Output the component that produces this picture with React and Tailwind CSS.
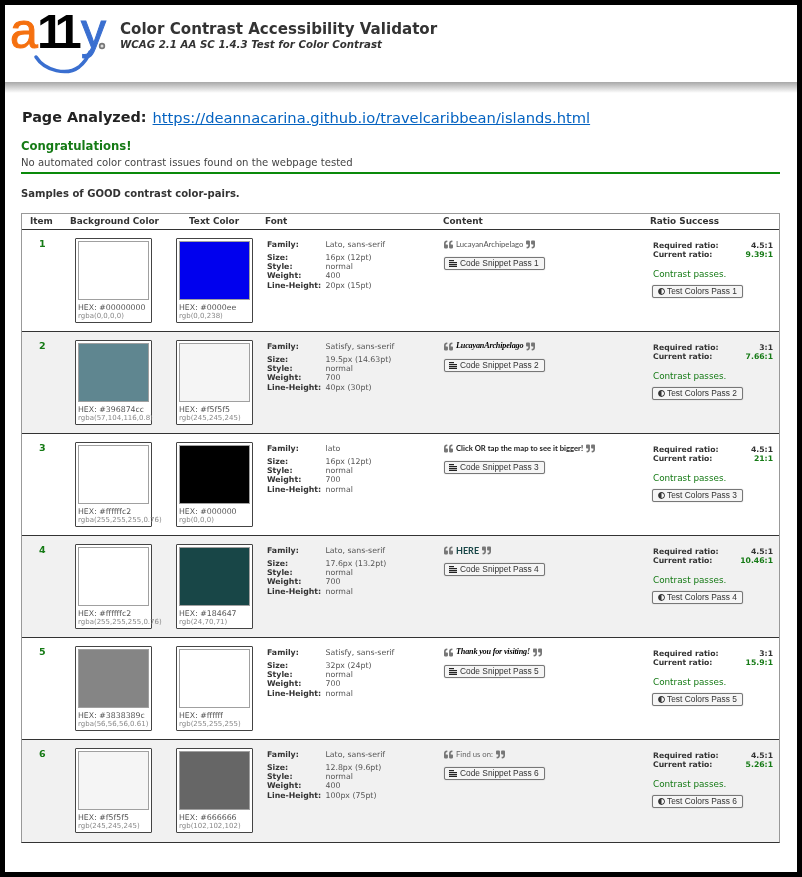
import React from 'react';
import { FaQuoteLeft, FaQuoteRight, FaAdjust } from 'react-icons/fa';

const rows = [
  {
    bgSwatch: '#ffffff', bgHex: '#00000000', bgRgb: 'rgba(0,0,0,0)',
    fgSwatch: '#0000ee', fgHex: '#0000ee', fgRgb: 'rgb(0,0,238)',
    family: 'Lato, sans-serif', size: '16px (12pt)', style: 'normal', weight: '400', lineHeight: '20px (15pt)',
    content: 'LucayanArchipelago', contentClass: 'text-[#555] font-normal',
    required: '4.5:1', current: '9.39:1',
  },
  {
    bgSwatch: '#5f8690', bgHex: '#396874cc', bgRgb: 'rgba(57,104,116,0.8)',
    fgSwatch: '#f5f5f5', fgHex: '#f5f5f5', fgRgb: 'rgb(245,245,245)',
    family: 'Satisfy, sans-serif', size: '19.5px (14.63pt)', style: 'normal', weight: '700', lineHeight: '40px (30pt)',
    content: 'LucayanArchipelago', contentClass: 'script text-black',
    required: '3:1', current: '7.66:1',
  },
  {
    bgSwatch: '#ffffff', bgHex: '#ffffffc2', bgRgb: 'rgba(255,255,255,0.76)',
    fgSwatch: '#000000', fgHex: '#000000', fgRgb: 'rgb(0,0,0)',
    family: 'lato', size: '16px (12pt)', style: 'normal', weight: '700', lineHeight: 'normal',
    content: 'Click OR tap the map to see it bigger!', contentClass: 'text-[#222] font-bold',
    required: '4.5:1', current: '21:1',
  },
  {
    bgSwatch: '#ffffff', bgHex: '#ffffffc2', bgRgb: 'rgba(255,255,255,0.76)',
    fgSwatch: '#184647', fgHex: '#184647', fgRgb: 'rgb(24,70,71)',
    family: 'Lato, sans-serif', size: '17.6px (13.2pt)', style: 'normal', weight: '700', lineHeight: 'normal',
    content: 'HERE', contentClass: 'text-[#184647] font-bold text-[9px]',
    required: '4.5:1', current: '10.46:1',
  },
  {
    bgSwatch: '#858585', bgHex: '#3838389c', bgRgb: 'rgba(56,56,56,0.61)',
    fgSwatch: '#ffffff', fgHex: '#ffffff', fgRgb: 'rgb(255,255,255)',
    family: 'Satisfy, sans-serif', size: '32px (24pt)', style: 'normal', weight: '700', lineHeight: 'normal',
    content: 'Thank you for visiting!', contentClass: 'script text-black',
    required: '3:1', current: '15.9:1',
  },
  {
    bgSwatch: '#f5f5f5', bgHex: '#f5f5f5', bgRgb: 'rgb(245,245,245)',
    fgSwatch: '#666666', fgHex: '#666666', fgRgb: 'rgb(102,102,102)',
    family: 'Lato, sans-serif', size: '12.8px (9.6pt)', style: 'normal', weight: '400', lineHeight: '100px (75pt)',
    content: 'Find us on:', contentClass: 'text-[#666] font-normal',
    required: '4.5:1', current: '5.26:1',
  },
];

function Logo() {
  return (
    <svg width="108" height="76" viewBox="0 0 108 76" className="shrink-0 overflow-visible">
      <text x="5" y="43" fontFamily="Liberation Sans" fontSize="50" fill="#f5700f" stroke="#f5700f" strokeWidth="1">a</text>
      <text x="32" y="43" fontFamily="Liberation Sans" fontSize="49" fontWeight="700" fill="#000" letterSpacing="-7">11</text>
      <text x="76" y="43" fontFamily="Liberation Sans" fontSize="50" fill="#3a6fd0" stroke="#3a6fd0" strokeWidth="1">y</text>
      <path d="M31 52 C40 66 62 71 74 62 C80 57 83 52 85 47" fill="none" stroke="#3a6fd0" strokeWidth="3.5" strokeLinecap="round" />
      <circle cx="97" cy="41" r="3.2" fill="#777" />
      <circle cx="97" cy="41" r="1.5" fill="#ddd" />
    </svg>
  );
}

function SnippetIcon() {
  return (
    <svg width="8" height="7" viewBox="0 0 8 7" className="shrink-0" fill="#222">
      <rect x="0" y="0" width="5" height="1.2" />
      <rect x="0" y="2" width="8" height="1.2" />
      <rect x="0" y="4" width="8" height="1.2" />
      <rect x="0" y="5.8" width="8" height="1.2" />
    </svg>
  );
}

function Swatch({ color, hex, rgb }) {
  return (
    <div className="w-[77px] h-[85px] border border-[#444] bg-white rounded-[1px] px-[2px] pt-[2px]">
      <div className="h-[59px] border-[1.5px] border-[#a0a0a0]" style={{ backgroundColor: color }} />
      <div className="text-[7.8px] leading-[9px] text-[#555] mt-[3px] whitespace-nowrap">HEX: {hex}</div>
      <div className="text-[7px] leading-[9px] text-[#888] whitespace-nowrap">{rgb}</div>
    </div>
  );
}

function PassButton({ icon, children, className }) {
  return (
    <button className={`flex items-center h-[13px] border border-[#777] rounded-[2px] bg-[#f5f5f5] shadow-[0_0_1px_#999] font-['Liberation_Sans'] text-[8.4px] text-[#333] whitespace-nowrap pr-[5px] ${className}`}>
      {icon}
      {children}
    </button>
  );
}

function Row({ row, index, last }) {
  const details = [
    ['Size:', row.size],
    ['Style:', row.style],
    ['Weight:', row.weight],
    ['Line-Height:', row.lineHeight],
  ];
  const isScript = row.contentClass.includes('script');
  return (
    <div className={`grid grid-cols-[53px_101px_91px_177px_208px_1fr] border-t border-[#333] pt-[8px] ${last ? 'h-[103px]' : 'h-[102px]'} ${index % 2 === 1 ? 'bg-[#f1f1f1]' : 'bg-white'}`}>
      <div className="text-[9.5px] font-bold text-[#157a15] pl-[17px] leading-[12px]">{index + 1}</div>
      <Swatch color={row.bgSwatch} hex={row.bgHex} rgb={row.bgRgb} />
      <Swatch color={row.fgSwatch} hex={row.fgHex} rgb={row.fgRgb} />
      <div className="text-[7.8px] pt-[2px] text-[#555]">
        <div className="flex leading-[9.3px] mb-[3.5px]">
          <span className="w-[58.5px] font-bold text-[#333]">Family:</span>
          <span>{row.family}</span>
        </div>
        {details.map(([label, value]) => (
          <div key={label} className="flex leading-[9.3px]">
            <span className="w-[58.5px] font-bold text-[#333]">{label}</span>
            <span>{value}</span>
          </div>
        ))}
      </div>
      <div>
        <div className="flex items-center gap-[3px] h-[13px] text-[#777]">
          <FaQuoteLeft size={9} />
          <span className={`text-[7.7px] whitespace-nowrap ${isScript ? "font-['Liberation_Serif'] italic font-bold text-[8.2px] text-black tracking-[-0.2px]" : `font-['Lato'] ${row.contentClass}`}`}>
            {row.content}
          </span>
          <FaQuoteRight size={9} />
        </div>
        <PassButton icon={<SnippetIcon />} className="mt-[6px] pl-[4px] gap-[3px]">Code Snippet Pass {index + 1}</PassButton>
      </div>
      <div className="pr-[6px]">
        <div className="flex justify-between text-[7.7px] font-bold leading-[9.3px] pt-[3px] pl-[1px] text-[#333]">
          <span>Required ratio:</span>
          <span>{row.required}</span>
        </div>
        <div className="flex justify-between text-[7.7px] font-bold leading-[9.3px] pl-[1px] text-[#333]">
          <span>Current ratio:</span>
          <span className="text-[#157a15]">{row.current}</span>
        </div>
        <div className="text-[8.8px] text-[#157a15] leading-[12px] mt-[8px] pl-[1px]">Contrast passes.</div>
        <PassButton icon={<FaAdjust size={7} className="shrink-0" />} className="mt-[5px] pl-[5px] gap-[2px]">Test Colors Pass {index + 1}</PassButton>
      </div>
    </div>
  );
}

export default function App() {
  return (
    <div className="w-[802px] h-[877px] bg-black p-[5px] font-['DejaVu_Sans',sans-serif]">
      <div className="h-[867px] bg-white blur-[0.3px]">
        {/* Header */}
        <div className="h-[77px] flex items-start bg-white">
          <Logo />
          <div className="pl-[7px] pt-[15px]">
            <div className="text-[15.1px] font-bold leading-[18px] text-[#333]">Color Contrast Accessibility Validator</div>
            <div className="text-[10.25px] font-bold italic leading-[12px] text-[#333]">WCAG 2.1 AA SC 1.4.3 Test for Color Contrast</div>
          </div>
        </div>
        <div className="h-[11px] bg-gradient-to-b from-[#a8a8a8] to-white" />

        <div className="pl-[16px] pr-[17px]">
          {/* Page analyzed */}
          <div className="flex items-center gap-[6px] mt-[15px] pl-[1px] h-[20px]">
            <span className="text-[14.4px] font-bold text-[#222]">Page Analyzed:</span>
            <a href="#" className="text-[14.7px] text-[#0563c1] underline">https://deannacarina.github.io/travelcaribbean/islands.html</a>
          </div>

          {/* Result */}
          <div className="text-[11.65px] font-bold text-[#157a15] leading-[15px] mt-[11px]">Congratulations!</div>
          <div className="text-[10.1px] text-[#444] leading-[13px] mt-[2px] pb-[3px] border-b-2 border-[#0a8a0a]">No automated color contrast issues found on the webpage tested</div>
          <div className="text-[10.05px] font-bold text-[#333] leading-[13px] mt-[13px]">Samples of GOOD contrast color-pairs.</div>

          {/* Table */}
          <div className="mt-[13px] border border-[#999] border-b-[#333]">
            <div className="grid grid-cols-[48px_119px_76px_178px_207px_1fr] h-[15px] text-[8.9px] font-bold leading-[15px] text-[#333]">
              <div className="pl-[8px]">Item</div>
              <div>Background Color</div>
              <div>Text Color</div>
              <div>Font</div>
              <div>Content</div>
              <div>Ratio Success</div>
            </div>
            {rows.map((row, i) => <Row key={i} row={row} index={i} last={i === rows.length - 1} />)}
          </div>
        </div>
      </div>
    </div>
  );
}
